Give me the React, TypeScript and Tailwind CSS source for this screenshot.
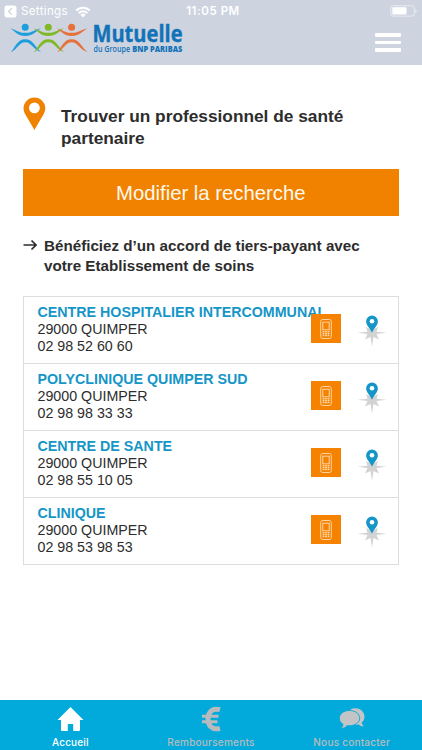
import React from "react";

const arial = "font-['Liberation_Sans',Arial,sans-serif]";
const inter = "font-['Inter',sans-serif]";

const places = [
  { name: "CENTRE HOSPITALIER INTERCOMMUNAL", phone: "02 98 52 60 60" },
  { name: "POLYCLINIQUE QUIMPER SUD", phone: "02 98 98 33 33" },
  { name: "CENTRE DE SANTE", phone: "02 98 55 10 05" },
  { name: "CLINIQUE", phone: "02 98 53 98 53" },
];

function Figure({ x, color }: { x: number; color: string }) {
  return (
    <g transform={`translate(${x} 0)`}>
      <circle cx="15" cy="5.200" r="3.500" fill={color} />
      <path d="M0 6.200C6.500 8 8 10.800 15 10.800S23.500 8 31 6.200C25 9.600 22.500 14 15 14S5.500 9.600 0 6.200Z" fill={color} />
      <path d="M0.500 30.300C5 25.500 7 17.200 15 17.200S25 25.500 31 30C23.500 28.500 21.500 20.300 15 20.300S7.500 27.500 0.500 30.300Z" fill={color} />
    </g>
  );
}

function Logo() {
  return (
    <svg width="176" height="34" viewBox="0 0 176 34" className="block overflow-visible">
      <Figure x={0.2} color="#1e9fdc" />
      <Figure x={23.3} color="#80b927" />
      <Figure x={46.600} color="#e8703a" />
      <text x="82.500" y="20.400" fontFamily="'Open Sans', sans-serif" fontWeight="700" fontSize="22.500" stroke="#1272b8" strokeWidth="0.400" textLength="90" lengthAdjust="spacingAndGlyphs" fill="#1272b8">Mutuelle</text>
      <text x="83.500" y="29.900" fontFamily="'Open Sans', sans-serif" fontWeight="600" fontSize="8.800" textLength="36.500" lengthAdjust="spacingAndGlyphs" fill="#1272b8">du Groupe</text>
      <text x="122.300" y="29.900" fontFamily="'Open Sans', sans-serif" fontWeight="800" fontSize="8.800" textLength="50" lengthAdjust="spacingAndGlyphs" fill="#1272b8">BNP PARIBAS</text>
    </svg>
  );
}

function PhoneButton() {
  return (
    <div className="flex h-[29px] w-[30px] items-center justify-center bg-[#f58200]">
      <svg width="12" height="20" viewBox="0 0 12 20" fill="none" stroke="#ffd5a3" strokeWidth="1">
        <rect x="0.700" y="0.500" width="10.600" height="19" rx="2" />
        <rect x="2.800" y="3.200" width="6.400" height="7.600" />
        <path d="M2.600 12.800h1.800M5.100 12.800h1.800M7.600 12.800h1.800M2.600 14.700h1.800M5.100 14.700h1.800M7.600 14.700h1.800M2.600 16.600h1.800M5.100 16.600h1.800M7.600 16.600h1.800" strokeWidth="1.400" />
      </svg>
    </div>
  );
}

function MapPin() {
  return (
    <svg width="30" height="34" viewBox="0 0 30 34">
      <path d="M0.500 17.800L10.500 16.700L9 12L14 14.500L15 6L16 14.500L21 12L19.500 16.700L29.500 17.800L19.500 18.900L22 24.500L16.500 22L15 31.500L13.500 22L8 24.500L10.500 18.900Z" fill="#d3d3d3" />
      <path fillRule="evenodd" d="M15 0.600a5.900 5.900 0 0 0-5.900 5.900c0 3.700 3.800 6.300 5.900 11.200c2.100-4.900 5.900-7.500 5.900-11.200A5.900 5.900 0 0 0 15 0.600Z" fill="#1596c8" />
      <circle cx="15" cy="6.300" r="2.300" fill="#fff" />
    </svg>
  );
}

export default function App() {
  return (
    <div className={`flex h-[750px] w-[422px] flex-col overflow-hidden bg-white ${arial}`}>
      <header className="h-[65px] shrink-0 bg-[#cdd4e0]">
        <div className={`grid h-[22px] grid-cols-3 items-center text-white ${inter}`}>
          <div className="flex items-center pt-px pl-1">
            <svg width="13" height="13" viewBox="0 0 13 13">
              <rect x="0.500" y="0.500" width="12" height="12" rx="2.500" fill="#fff" />
              <path d="M7.800 3.300L4.600 6.500L7.800 9.700" fill="none" stroke="#cdd4e0" strokeWidth="1.300" />
            </svg>
            <span className="ml-[4px] text-[11.5px] tracking-[0.36px]">Settings</span>
            <svg width="16" height="12" viewBox="0 0 16 12" className="ml-[7px]" fill="none" stroke="#fff" strokeWidth="2">
              <path d="M1.200 4.500a9.600 9.600 0 0 1 13.600 0M3.700 7.100a6 6 0 0 1 8.600 0" />
              <path d="M5.400 8.800a3.700 3.700 0 0 1 5.200 0L8 11.500Z" fill="#fff" stroke="none" />
            </svg>
          </div>
          <div className="pt-px pl-[4px] text-center text-[11.5px] font-semibold tracking-[0.56px]">11:05 PM</div>
          <div className="flex justify-end pr-[5px]">
            <svg width="27" height="12" viewBox="0 0 27 12">
              <rect x="0.800" y="0.700" width="23.500" height="10.400" rx="2.400" fill="none" stroke="#e7eaf1" />
              <rect x="2.300" y="2.200" width="14.200" height="7.400" rx="0.800" fill="#fff" />
              <path d="M25.400 4v4a2.200 2.200 0 0 0 0-4Z" fill="#e7eaf1" />
            </svg>
          </div>
        </div>
        <div className="flex items-start justify-between pr-[21px] pl-[10px]">
          <Logo />
          <div className="mt-[11px] flex w-[26px] flex-col gap-[4px]">
            <div className="h-[3.500px] rounded-[1px] bg-white" />
            <div className="h-[3.500px] rounded-[1px] bg-white" />
            <div className="h-[3.500px] rounded-[1px] bg-white" />
          </div>
        </div>
      </header>

      <main className="flex-1 px-[23px] pt-[32px] text-[#2d2d2d]">
        <div className="flex h-[72px] items-start">
          <svg width="23" height="34" viewBox="0 0 23 34">
            <path d="M11.400 0.600A10.900 10.900 0 0 0 0.500 11.500c0 4 2.300 6.900 4.400 10.200L11.400 33l6.500-11.300c2.100-3.300 4.400-6.200 4.400-10.200A10.900 10.900 0 0 0 11.400 0.600Z" fill="#ef8200" />
            <circle cx="11.400" cy="10.900" r="5.400" fill="#fff" />
          </svg>
          <h1 className="mt-[9px] ml-[15px] text-[17.300px] leading-[21.500px] font-bold whitespace-nowrap">
            Trouver un professionnel de santé<br />partenaire
          </h1>
        </div>
        <button className="block h-[47px] w-[375.500px] bg-[#f08200] pt-[2px] text-[20.300px] text-[#fff8ec]">Modifier la recherche</button>
        <div className="mt-[20px] flex h-[60px] items-start">
          <svg width="14" height="12" viewBox="0 0 14 12" className="mt-[3px]" fill="none" stroke="#2d2d2d" strokeWidth="1.700">
            <path d="M0.500 6H12.500M8.500 1.500L13 6L8.500 10.500" />
          </svg>
          <p className="ml-[7px] text-[15.200px] leading-[19.500px] font-bold whitespace-nowrap">
            Bénéficiez d’un accord de tiers-payant avec<br />votre Etablissement de soins
          </p>
        </div>
        <div className="flex h-[269px] w-[376px] flex-col divide-y divide-[#dddddd] border border-[#dddddd]">
          {places.map((p) => (
            <div key={p.name} className="flex min-h-0 flex-1 items-start pl-[13.500px]">
              <div className="mt-[7px] w-[273.500px] text-[14.250px] leading-[17.200px] whitespace-nowrap">
                <div className="font-bold text-[#1596c8]">{p.name}</div>
                <div>29000 QUIMPER</div>
                <div>{p.phone}</div>
              </div>
              <div className="relative mt-[17px]"><PhoneButton /></div>
              <div className="mt-[18px] ml-[16px]"><MapPin /></div>
            </div>
          ))}
        </div>
      </main>

      <nav className={`grid h-[50px] shrink-0 grid-cols-3 bg-[#02aadb] text-[10px] font-medium text-[#b8bbbc] ${inter}`}>
        <div className="flex flex-col items-center text-white">
          <svg width="27" height="26" viewBox="0 0 27 26" className="mt-[7px]" fill="#fff">
            <path d="M13.500 0L26.500 13H23V23q0 1-1 1H16.200V17H10.800V24H5q-1 0-1-1V13H0.500Z" />
          </svg>
          <span className="mt-[2px] leading-[14px] tracking-[0.15px]">Accueil</span>
        </div>
        <div className="flex flex-col items-center">
          <svg width="22" height="26" viewBox="0 0 22 26" className="mt-[7px]" fill="none" stroke="#b8bbbc" strokeWidth="5">
            <path d="M20 2.700C11.500 0.500 8 6 8 12S11.500 23.500 20 21.300" />
            <path d="M2 9.300H18.500M2 14.700H17.500" strokeWidth="3" />
          </svg>
          <span className="mt-[2px] leading-[14px] tracking-[0.24px]">Remboursements</span>
        </div>
        <div className="flex flex-col items-center">
          <svg width="26" height="26" viewBox="0 0 26 26" className="mt-[7px]" fill="#c3c4c5">
            <path d="M11.500 2.500C17-1 25.500 2.500 25.500 9.500c0 2.800-1 4.500-2.700 6 .1 1.700.9 2.700 2 3.800-2.200.1-3.800-.7-5-1.900-1 .3-2 .4-3 .4Z" />
            <path d="M10.500 3.500C4.900 3.500.4 6.700.4 11.200c0 2.800 1.500 4.800 3.600 6.100-.2 1.700-.9 3-2.200 4.200 2.700 0 4.700-1 6.200-2.800 7 .8 12.700-2.700 12.700-7.500 0-4.500-4.500-7.700-10.200-7.700Z" stroke="#02aadb" strokeWidth="0.900" />
          </svg>
          <span className="mt-[2px] leading-[14px] tracking-[0.23px]">Nous contacter</span>
        </div>
      </nav>
    </div>
  );
}
